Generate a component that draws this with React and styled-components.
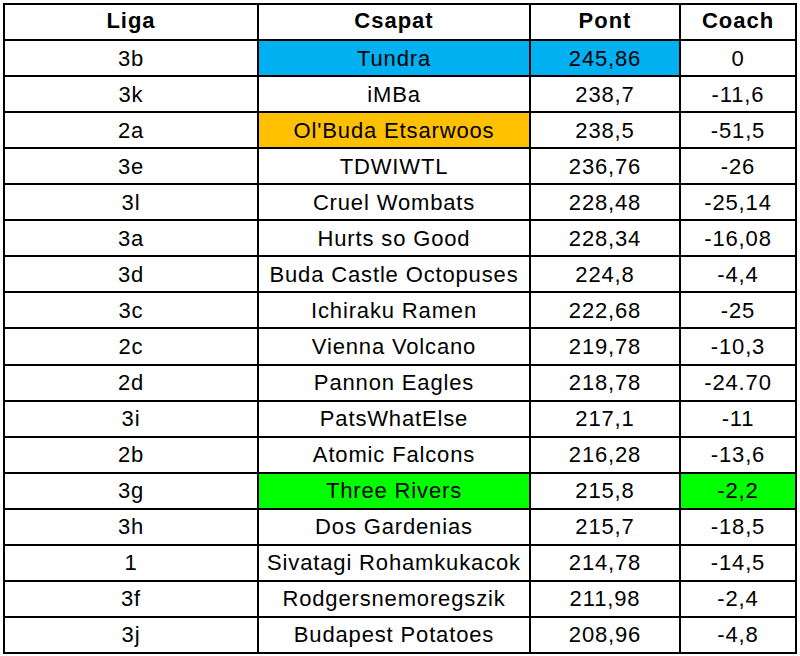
import styled, { createGlobalStyle } from "styled-components";

const GlobalStyle = createGlobalStyle`
  html, body {
    margin: 0;
    padding: 0;
    background: #fff;
  }
  body {
    font-family: "Liberation Sans", Arial, sans-serif;
  }
`;

const Sheet = styled.div`
  padding: 3px 0 0 3px;
`;

const Table = styled.div`
  display: grid;
  grid-template-columns: 252px 270px 148px 114px;
  grid-template-rows: 34px repeat(17, 1fr);
  gap: 2px;
  padding: 2px;
  width: 794px;
  height: 651px;
  box-sizing: border-box;
  background: #000;
`;

const Cell = styled.div`
  display: flex;
  align-items: center;
  justify-content: center;
  background: ${({ $fill }) => $fill || "#fff"};
  color: #000;
  font-size: 22px;
  letter-spacing: ${({ $head }) => ($head ? "1px" : "0.85px")};
  font-weight: ${({ $head }) => ($head ? 700 : 400)};
  white-space: nowrap;
  padding: ${({ $head }) => ($head ? "0 0 3px" : "1px 0 0")};
`;

const BLUE = "#00b0f0";
const ORANGE = "#ffc000";
const GREEN = "#00ff00";

const rows = [
  { liga: "3b", team: "Tundra", pont: "245,86", coach: "0", teamFill: BLUE, pontFill: BLUE },
  { liga: "3k", team: "iMBa", pont: "238,7", coach: "-11,6" },
  { liga: "2a", team: "Ol'Buda Etsarwoos", pont: "238,5", coach: "-51,5", teamFill: ORANGE },
  { liga: "3e", team: "TDWIWTL", pont: "236,76", coach: "-26" },
  { liga: "3l", team: "Cruel Wombats", pont: "228,48", coach: "-25,14" },
  { liga: "3a", team: "Hurts so Good", pont: "228,34", coach: "-16,08" },
  { liga: "3d", team: "Buda Castle Octopuses", pont: "224,8", coach: "-4,4" },
  { liga: "3c", team: "Ichiraku Ramen", pont: "222,68", coach: "-25" },
  { liga: "2c", team: "Vienna Volcano", pont: "219,78", coach: "-10,3" },
  { liga: "2d", team: "Pannon Eagles", pont: "218,78", coach: "-24.70" },
  { liga: "3i", team: "PatsWhatElse", pont: "217,1", coach: "-11" },
  { liga: "2b", team: "Atomic Falcons", pont: "216,28", coach: "-13,6" },
  { liga: "3g", team: "Three Rivers", pont: "215,8", coach: "-2,2", teamFill: GREEN, coachFill: GREEN },
  { liga: "3h", team: "Dos Gardenias", pont: "215,7", coach: "-18,5" },
  { liga: "1", team: "Sivatagi Rohamkukacok", pont: "214,78", coach: "-14,5" },
  { liga: "3f", team: "Rodgersnemoregszik", pont: "211,98", coach: "-2,4" },
  { liga: "3j", team: "Budapest Potatoes", pont: "208,96", coach: "-4,8" },
];

export default function App() {
  return (
    <>
      <GlobalStyle />
      <Sheet>
        <Table>
          <Cell $head>Liga</Cell>
          <Cell $head>Csapat</Cell>
          <Cell $head>Pont</Cell>
          <Cell $head>Coach</Cell>
          {rows.map((r) => [
            <Cell key={r.team + "l"}>{r.liga}</Cell>,
            <Cell key={r.team + "t"} $fill={r.teamFill}>{r.team}</Cell>,
            <Cell key={r.team + "p"} $fill={r.pontFill}>{r.pont}</Cell>,
            <Cell key={r.team + "c"} $fill={r.coachFill}>{r.coach}</Cell>,
          ])}
        </Table>
      </Sheet>
    </>
  );
}
